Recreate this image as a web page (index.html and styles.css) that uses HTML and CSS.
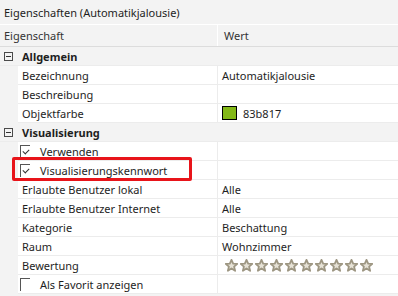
FILE: index.html
```html
<!DOCTYPE html>
<html lang="de">
<head>
    <meta charset="UTF-8">
    <title>Eigenschaften</title>
    <link rel="stylesheet" href="styles.css">
</head>
<body>
    <div class="panel">
        <div class="title">Eigenschaften (Automatikjalousie)</div>
        <div class="grid">
            <div class="head">
                <div class="head-name">Eigenschaft</div>
                <div class="head-value">Wert</div>
            </div>

            <div class="group">
                <span class="toggle"></span>
                <span class="group-name">Allgemein</span>
            </div>
            <div class="row"><div class="name">Bezeichnung</div><div class="value">Automatikjalousie</div></div>
            <div class="row"><div class="name">Beschreibung</div><div class="value"></div></div>
            <div class="row"><div class="name">Objektfarbe</div><div class="value"><span class="swatch"></span>83b817</div></div>

            <div class="group">
                <span class="toggle"></span>
                <span class="group-name">Visualisierung</span>
            </div>
            <div class="row"><div class="name check-name"><span class="check on"></span>Verwenden</div><div class="value"></div></div>
            <div class="row marked"><div class="name check-name"><span class="check on"></span>Visualisierungskennwort</div><div class="value"></div></div>
            <div class="row"><div class="name">Erlaubte Benutzer lokal</div><div class="value">Alle</div></div>
            <div class="row"><div class="name">Erlaubte Benutzer Internet</div><div class="value">Alle</div></div>
            <div class="row"><div class="name">Kategorie</div><div class="value">Beschattung</div></div>
            <div class="row"><div class="name">Raum</div><div class="value">Wohnzimmer</div></div>
            <div class="row"><div class="name">Bewertung</div><div class="value stars" id="stars"></div></div>
            <div class="row"><div class="name check-name"><span class="check"></span>Als Favorit anzeigen</div><div class="value"></div></div>
        </div>
    </div>

    <script>
        // ten empty rating stars
        const star = '<svg width="13" height="13" viewBox="0 0 13 13"><polygon points="6.5,0.8 8.2,4.6 12.3,4.9 9.1,7.6 10.1,11.8 6.5,9.5 2.9,11.8 3.9,7.6 0.7,4.9 4.8,4.6" fill="#e6e2d6" stroke="#9d9682" stroke-width="1.8" stroke-linejoin="round"/></svg>';
        document.getElementById('stars').innerHTML = star.repeat(10);
    </script>
</body>
</html>
```

FILE: styles.css
```css
:root {
    --panel-bg: #f3f3f3;
    --line: #ececec;
    --head-line: #dcdcdc;
    --text: #1e1e1e;
    --marker: #e8141a;
}

body {
    margin: 0;
    font-family: 'Noto Sans', sans-serif;
    font-size: 11px;
    color: var(--text);
    background-color: var(--panel-bg);
}

.panel {
    width: 398px;
    height: 296px;
    overflow: hidden;
}

.title {
    height: 24px;
    line-height: 26px;
    padding-left: 4px;
    border-bottom: 1px solid #ffffff;
}

.head {
    display: flex;
    height: 21px;
    line-height: 21px;
    color: #333;
    border-bottom: 1px solid var(--head-line);
}

.head-name {
    width: 213px;
    padding-left: 4px;
    border-right: 1px solid #ffffff;
}

.head-value {
    padding-left: 6px;
}

.group {
    display: flex;
    align-items: center;
    height: 18px;
    border-bottom: 1px solid var(--line);
}

.toggle {
    position: relative;
    width: 7px;
    height: 7px;
    margin-left: 4px;
    border: 1px solid #4a4a4a;
}

.toggle::after {
    content: '';
    position: absolute;
    left: 1px;
    top: 3px;
    width: 5px;
    height: 1px;
    background-color: #333;
}

.group-name {
    margin-left: 9px;
    font-weight: bold;
}

.row {
    display: flex;
    height: 18px;
    line-height: 19px;
    margin-left: 18px;
    background-color: #ffffff;
    border-bottom: 1px solid var(--line);
}

.name {
    width: 195px;
    padding-left: 4px;
    white-space: nowrap;
    border-right: 1px solid var(--line);
}

.value {
    display: flex;
    align-items: center;
    padding-left: 4px;
}

.check-name {
    display: flex;
    align-items: center;
    padding-left: 2px;
    width: 197px;
}

.check {
    position: relative;
    width: 10px;
    height: 13px;
    margin-right: 10px;
    border-left: 1px solid #555;
    border-top: 1px solid #555;
    box-sizing: border-box;
}

.check.on::after {
    content: '';
    position: absolute;
    left: 2px;
    top: 3px;
    width: 5px;
    height: 3px;
    border-left: 1px solid #333;
    border-bottom: 1px solid #333;
    transform: rotate(-45deg);
}

.marked {
    position: relative;
}

.marked::before {
    content: '';
    position: absolute;
    left: -6px;
    top: -4px;
    width: 174px;
    height: 18px;
    border: 3px solid var(--marker);
    border-radius: 2px;
}

.swatch {
    width: 13px;
    height: 12px;
    margin-right: 6px;
    background-color: #83b817;
    border: 1px solid #000;
}

.stars {
    gap: 2px;
    padding-left: 7px;
}

.stars svg {
    display: block;
}
```
